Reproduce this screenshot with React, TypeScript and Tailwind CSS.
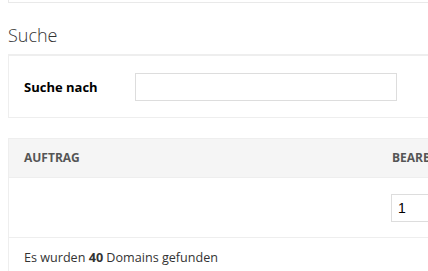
import React from "react";

export default function App() {
  return (
    <div
      className="w-[428px] h-[271px] overflow-hidden bg-white pl-2"
      style={{ fontFamily: '"Open Sans", "Noto Sans", sans-serif' }}
    >
      <div className="w-[520px]">
        <div className="h-[3px] border-l border-b border-[#e9e9e9]" />
        <h2 className="mt-[20px] mb-[7px] text-[18px] leading-[24px] font-light text-[#333]">
          Suche
        </h2>
        <div className="border-t-2 border-l border-b border-[#eeeeee] pt-[17px] pb-[16px] pl-[15px] flex items-center">
          <label className="w-[111px] text-[13px] font-bold text-black leading-[16px]">
            Suche nach
          </label>
          <input
            type="text"
            className="w-[262px] h-[28px] border border-[#dddddd] bg-white outline-none"
          />
        </div>
        <div className="mt-[20px] border-t border-l border-[#eeeeee]">
          <div className="grid grid-cols-[368px_1fr] bg-[#f5f5f5] h-[39px] items-center border-b border-[#eeeeee]">
            <div className="pl-[15px] text-[12px] font-bold text-[#555] leading-[16px]">
              AUFTRAG
            </div>
            <div className="pl-[15px] text-[12px] font-bold text-[#555] leading-[16px]">
              BEARBEITEN
            </div>
          </div>
          <div className="grid grid-cols-[368px_1fr] border-b border-[#eeeeee] pt-[16px] pb-[15px]">
            <div />
            <div className="pl-[14px]">
              <input
                type="text"
                defaultValue="1"
                className="w-[100px] h-[28px] border border-[#dddddd] bg-white px-[6px] text-[14px] text-black outline-none"
                style={{ fontFamily: '"Liberation Sans", Arial, sans-serif' }}
              />
            </div>
          </div>
          <div className="pl-[15px] pt-[11px] pb-[10px] text-[12.6px] leading-[18px] text-[#333]">
            Es wurden <b className="font-bold">40</b> Domains gefunden
          </div>
        </div>
      </div>
    </div>
  );
}
